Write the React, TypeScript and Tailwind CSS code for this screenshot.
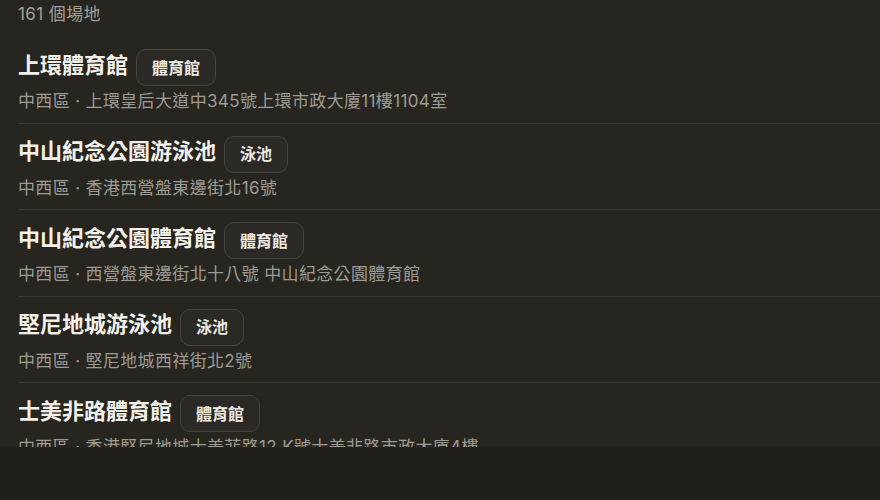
import React from "react";

const venues = [
  { name: "上環體育館", tag: "體育館", addr: "中西區 · 上環皇后大道中345號上環市政大廈11樓1104室" },
  { name: "中山紀念公園游泳池", tag: "泳池", addr: "中西區 · 香港西營盤東邊街北16號" },
  { name: "中山紀念公園體育館", tag: "體育館", addr: "中西區 · 西營盤東邊街北十八號 中山紀念公園體育館" },
  { name: "堅尼地城游泳池", tag: "泳池", addr: "中西區 · 堅尼地城西祥街北2號" },
  { name: "士美非路體育館", tag: "體育館", addr: "中西區 · 香港堅尼地城士美菲路12 K號士美非路市政大廈4樓" },
];

export default function App() {
  return (
    <div
      className="h-[500px] w-[880px] flex flex-col bg-[#262520] overflow-hidden"
      style={{ fontFamily: 'Inter, "Noto Sans CJK TC", "Noto Sans", sans-serif' }}
    >
      <div className="flex-1 overflow-hidden">
        <div className="h-[37px] pl-[18px] text-[17px] leading-[28px] tracking-[0.4px] text-[#a3a199]">161 個場地</div>
        {venues.map((v) => (
          <div key={v.name} className="ml-[18px] pt-[12px] pb-[8.5px] border-b border-[#3a3833]">
            <div className="flex items-center gap-2 h-[37px]">
              <span className="text-[22px] font-bold text-[#f3f1ea] leading-[30px] mb-[6px]">{v.name}</span>
              <span className="h-[37px] flex items-center px-[15px] rounded-[10px] border border-[#45433d] bg-[#2a2925] text-[16px] font-semibold text-[#ebe9e2]">
                {v.tag}
              </span>
            </div>
            <div className="mt-[2px] text-[17px] leading-[26px] tracking-[0.35px] text-[#9d9b92] whitespace-nowrap">{v.addr}</div>
          </div>
        ))}
      </div>
      <div className="h-[53px] shrink-0 bg-[#1f1e1b] border-t border-[#23221e]" />
    </div>
  );
}
